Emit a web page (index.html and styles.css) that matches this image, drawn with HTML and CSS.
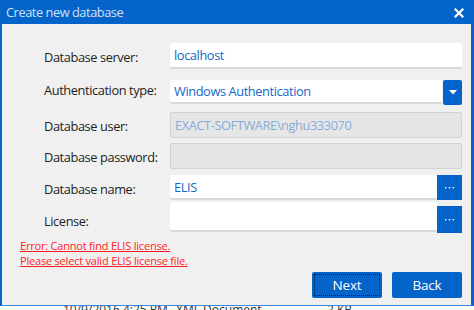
FILE: index.html
```html
<!DOCTYPE html>
<html>
<head>
<meta charset="utf-8">
<link rel="stylesheet" href="styles.css">
</head>
<body>
<div class="window">
  <div class="titlebar">
    <span class="title">Create new database</span>
    <svg class="close" width="10" height="10" viewBox="0 0 10 10"><path d="M1.5 1.5 L8.5 8.5 M8.5 1.5 L1.5 8.5" stroke="#fff" stroke-width="2.2" stroke-linecap="square"/></svg>
  </div>
  <div class="content">
    <div class="form">
      <div class="row r1">
        <label class="label">Database server:</label>
        <div class="field h26"><span class="val">localhost</span></div>
      </div>
      <div class="row r2">
        <label class="label">Authentication type:</label>
        <div class="combo">
          <div class="field h24 grow"><span class="val">Windows Authentication</span></div>
          <div class="drop"><svg width="8" height="5" viewBox="0 0 8 5"><path d="M0 0 H8 L4 4.5 Z" fill="#fff"/></svg></div>
        </div>
      </div>
      <div class="row r3">
        <label class="label">Database user:</label>
        <div class="field disabled h26"><span class="val dim">EXACT-SOFTWARE\nghu333070</span></div>
      </div>
      <div class="row r4">
        <label class="label">Database password:</label>
        <div class="field disabled h26"></div>
      </div>
      <div class="row r5">
        <label class="label">Database name:</label>
        <div class="combo">
          <div class="field h25 grow"><span class="val">ELIS</span></div>
          <div class="dots"><svg width="9" height="2" viewBox="0 0 9 2"><rect x="0" y="0" width="1.4" height="1.4" fill="#fff"/><rect x="3.8" y="0" width="1.4" height="1.4" fill="#fff"/><rect x="7.6" y="0" width="1.4" height="1.4" fill="#fff"/></svg></div>
        </div>
      </div>
      <div class="row r6">
        <label class="label">License:</label>
        <div class="combo">
          <div class="field h30 grow"></div>
          <div class="dots dots6"><svg width="9" height="2" viewBox="0 0 9 2"><rect x="0" y="0" width="1.4" height="1.4" fill="#fff"/><rect x="3.8" y="0" width="1.4" height="1.4" fill="#fff"/><rect x="7.6" y="0" width="1.4" height="1.4" fill="#fff"/></svg></div>
        </div>
      </div>
    </div>
    <div class="error">
      <a>Error: Cannot find ELIS license.</a><br>
      <a>Please select valid ELIS license file.</a>
    </div>
    <div class="buttons">
      <button class="btn focused"><span>Next</span></button>
      <button class="btn"><span>Back</span></button>
    </div>
  </div>
</div>
<div class="under">
  <span class="c1">10/9/2016 4:25 PM</span><span class="c2">XML Document</span><span class="c3">2 KB</span>
</div>
</body>
</html>
```

FILE: styles.css
```css
* { box-sizing: border-box; margin: 0; padding: 0; }
html, body { width: 474px; height: 310px; overflow: hidden; background: #fff; }
body { font-family: "Open Sans", "Noto Sans", sans-serif; color: #1e1e1e; }

.window {
  height: 306px;
  background: #f0f0f0;
  border-left: 2px solid #0a64c8;
  border-right: 3px solid #0a64c8;
  border-bottom: 1px solid #3c8ae0;
  display: flex;
  flex-direction: column;
}
.titlebar {
  height: 24px;
  background: #0564c9;
  display: flex;
  align-items: center;
  justify-content: space-between;
  padding: 0 7px 0 4px;
}
.title { color: #cfe1f7; font-size: 12.8px; letter-spacing: -0.45px; }
.close { margin-top: 1px; }

.content { padding: 19px 9px 0 42px; flex: 1; display: flex; flex-direction: column; }
.form {
  display: grid;
  grid-template-columns: 126px 1fr;
  grid-template-rows: 37px 32px 31px 32px 27px 31px;
}
.row { display: contents; }
.label { font-size: 12.8px; letter-spacing: -0.4px; align-self: start; line-height: 18px; }
.r1 .label { margin-top: 5px; }
.r2 .label { margin-top: 1px; }
.r3 .label { margin-top: 5px; }
.r4 .label { margin-top: 5px; }
.r5 .label { margin-top: 5px; }
.r6 .label { margin-top: 10px; }

.field {
  background: #fff;
  border-bottom: 2px solid #d9d9d9;
  border-radius: 2px;
  display: flex;
  align-items: center;
  padding-left: 4px;
  align-self: start;
}
.h24 { height: 24px; }
.h25 { height: 25px; }
.h26 { height: 26px; }
.h30 { height: 30px; }
.field.disabled { background: #e6e6e6; border: 1px solid #d2d2d2; }
.val { color: #1368c8; font-size: 12.8px; letter-spacing: -0.4px; }
.val.dim { color: #86acd9; }
.combo { display: flex; align-self: start; }
.grow { flex: 1; }
.drop {
  width: 19px; height: 25px; margin-left: 1px;
  background: #0564c9; border-radius: 2px;
  display: flex; align-items: center; justify-content: center;
}
.dots {
  width: 25px; height: 25px;
  background: #0564c9;
  display: flex; align-items: center; justify-content: center;
}
.dots6 { margin-top: 4px; height: 27px; }

.error { margin: 5px 0 0 -24px; font-size: 11px; line-height: 15px; letter-spacing: -0.2px; }
.error a { color: #ff1d25; text-decoration: underline; }

.buttons { display: flex; justify-content: flex-end; gap: 10px; margin-top: 4px; }
.btn {
  width: 70px; height: 26px;
  background: #0564c9; color: #fff;
  border: none; border-radius: 2px;
  font-family: inherit; font-size: 13.5px; letter-spacing: -0.2px;
  padding: 2px;
}
.btn span { display: flex; align-items: center; justify-content: center; height: 100%; }
.btn.focused span { border: 1px dotted #0b1e3a; }

.under { height: 4px; overflow: hidden; position: relative; font-size: 12px; color: #333; }
.under span { position: absolute; top: -3px; line-height: 14px; }
.c1 { left: 63px; }
.c2 { left: 176px; }
.c3 { left: 327px; }
```
